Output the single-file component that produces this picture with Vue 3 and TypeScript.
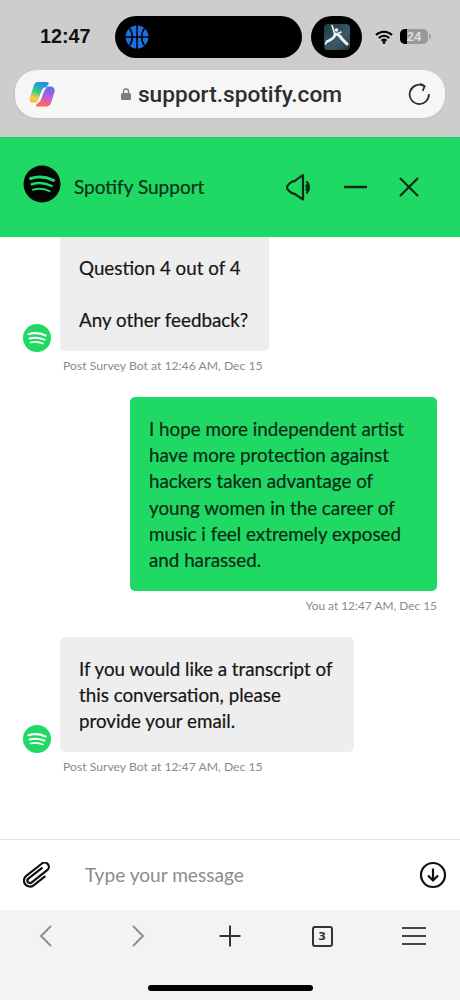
<script setup lang="ts">
interface Message {
  id: number
  mine: boolean
  width: number
  lines: string[]
  meta: string
}
const messages: Message[] = [
  { id: 1, mine: false, width: 209, lines: ['Question 4 out of 4', '', 'Any other feedback?'], meta: 'Post Survey Bot at 12:46 AM, Dec 15' },
  { id: 2, mine: true, width: 307, lines: ['I hope more independent artist', 'have more protection against', 'hackers taken advantage of', 'young women in the career of', 'music i feel extremely exposed', 'and harassed.'], meta: 'You at 12:47 AM, Dec 15' },
  { id: 3, mine: false, width: 294, lines: ['If you would like a transcript of', 'this conversation, please', 'provide your email.'], meta: 'Post Survey Bot at 12:47 AM, Dec 15' },
]
</script>

<template>
  <div class="phone">
    <div class="chrome">
      <div class="status">
        <span class="time">12:47</span>
        <div class="island">
          <svg class="ball" viewBox="0 0 24 24" width="24" height="24">
            <circle cx="12" cy="12" r="11.500" fill="#1d6fe0" />
            <g fill="none" stroke="#000" stroke-width="1.500">
              <path d="M12 0v24M0 12h24" />
              <path d="M4.500 3.500c3.800 4.500 3.800 12.500 0 17M19.500 3.500c-3.800 4.500-3.800 12.500 0 17" />
            </g>
          </svg>
        </div>
        <div class="island-dot">
          <svg viewBox="0 0 26 26" width="26" height="26">
            <defs>
              <linearGradient id="thumb" x1="0" y1="0" x2="1" y2="1">
                <stop offset="0" stop-color="#1f3a48" />
                <stop offset="0.6" stop-color="#3a5a68" />
                <stop offset="1" stop-color="#26343c" />
              </linearGradient>
            </defs>
            <rect width="26" height="26" rx="4" fill="url(#thumb)" />
            <circle cx="12.500" cy="6" r="1.800" fill="#eef4f5" />
            <g fill="none" stroke="#eef4f5" stroke-linecap="round" stroke-linejoin="round">
              <path d="M8 1.500 10.500 9" stroke-width="1.600" />
              <path d="M11 10c3 0 5 1.500 7 5l5 5" stroke-width="3" />
              <path d="M11 11c-1 3-4 5-8 6.500" stroke-width="2.600" />
              <path d="M3 17.500 1.500 20" stroke-width="1.600" />
              <path d="M13 10l4-2" stroke-width="1.600" />
            </g>
          </svg>
        </div>
        <div class="status-right">
          <svg viewBox="0 0 18 14" width="18" height="14">
            <path d="M1 5c4.500-4.500 11.500-4.500 16 0M3.800 8c3-3 7.400-3 10.400 0M6.500 10.800c1.500-1.400 3.500-1.400 5 0" fill="none" stroke="#000" stroke-width="2" />
            <circle cx="9" cy="12.500" r="1.400" fill="#000" />
          </svg>
          <div class="battery">
            <div class="battery-fill"></div>
            <span class="battery-num">24</span>
          </div>
          <div class="battery-nub"></div>
        </div>
      </div>
      <div class="urlbar">
        <svg class="copilot" viewBox="0 0 26 26" width="26" height="26">
          <defs>
            <linearGradient id="cpa" x1="0.5" y1="0" x2="0.2" y2="1">
              <stop offset="0" stop-color="#1f8fe8" />
              <stop offset="0.45" stop-color="#35c98a" />
              <stop offset="0.8" stop-color="#f3d63e" />
              <stop offset="1" stop-color="#f7b23b" />
            </linearGradient>
            <linearGradient id="cpb" x1="0.6" y1="0" x2="0.4" y2="1">
              <stop offset="0" stop-color="#5a6ef0" />
              <stop offset="0.5" stop-color="#b75fe0" />
              <stop offset="0.8" stop-color="#f0608a" />
              <stop offset="1" stop-color="#f4703a" />
            </linearGradient>
          </defs>
          <path d="M9 1h9c1.500 0 2 1 1.500 2.200L15 8 10.500 18.500C9.500 20.500 8 21.500 6 21.500H4c-2.500 0-4-2-3.200-4.500L5 4c.6-1.800 2-3 4-3z" fill="url(#cpa)" />
          <path d="M16 5.500h5.500c3 0 4.800 2.500 4 5.200L22 22c-.7 2.300-2.500 3.500-4.500 3.500H8.500c-1.400 0-1.800-1-1-2l3.500-3.500 4-11z" fill="url(#cpb)" />
          <path d="M15.500 6.500c-1.700 1-2.500 2.500-3.200 4.300l-2.600 7c-.6 1.500-1.200 2.500-2 3.200 2 .2 3.500-.7 4.300-2.800l2.700-7.200c.6-1.800 1.800-3.300 3.300-4.500z" fill="#fdfdfd" />
        </svg>
        <div class="address">
          <svg viewBox="0 0 10 12" width="10" height="12">
            <path d="M2.500 5V3.500a2.500 2.500 0 0 1 5 0V5" fill="none" stroke="#7c7c7c" stroke-width="1.300" />
            <rect y="5" width="10" height="7" rx="1.500" fill="#7c7c7c" />
          </svg>
          <span>support.spotify.com</span>
        </div>
        <svg class="reload" viewBox="0 0 24 24" width="22" height="22">
          <path d="M17.500 3.300A10.500 10.500 0 1 0 22.800 12" fill="none" stroke="#2b2b2b" stroke-width="1.900" />
          <path d="M13.500 .8l4.700 2.700-2.200 5" fill="none" stroke="#2b2b2b" stroke-width="1.900" />
        </svg>
      </div>
    </div>

    <header class="head">
      <svg class="logo" viewBox="0 0 38 38" width="38" height="38">
        <circle cx="19" cy="19" r="18.500" fill="#050505" />
        <g fill="none" stroke="#1fd964" stroke-linecap="round">
          <path d="M7.500 13.500c7.500-2.400 15.500-1.800 23 1.800" stroke-width="3" />
          <path d="M8.800 19.300c6.500-2 13.500-1.400 19.800 1.700" stroke-width="2.500" />
          <path d="M10 24.700c5.500-1.500 11.200-1 16.500 1.500" stroke-width="2" />
        </g>
      </svg>
      <span class="title">Spotify Support</span>
      <div class="head-actions">
        <svg viewBox="0 0 27 27" width="27" height="27">
          <path d="M17 1.200V25.500L8 19.500H6.500C3.500 17.500 1 15.500 1 13.400s2.500-4 5.500-6L8 7.300z" fill="none" stroke="#0b2b16" stroke-width="2.200" stroke-linejoin="round" />
          <path d="M20.500 7.500c3.200 3 3.200 9 0 12" fill="none" stroke="#0b2b16" stroke-width="2.200" />
          <path d="M20 10.500c1.500 2 1.500 4 0 6" fill="none" stroke="#0b2b16" stroke-width="2.200" />
        </svg>
        <svg viewBox="0 0 23 4" width="23" height="4">
          <path d="M0 2h23" stroke="#0b2b16" stroke-width="2.500" />
        </svg>
        <svg viewBox="0 0 22 22" width="22" height="22">
          <path d="M2 2l18 18M20 2 2 20" stroke="#0b2b16" stroke-width="2.200" />
        </svg>
      </div>
    </header>

    <main class="chat">
      <div v-for="m in messages" :key="m.id" class="msg" :class="{ mine: m.mine }">
        <div class="row">
          <svg v-if="!m.mine" class="avatar" viewBox="0 0 28 28" width="28" height="28">
            <circle cx="14" cy="14" r="14" fill="#1fd964" />
            <g fill="none" stroke="#fff" stroke-linecap="round">
              <path d="M5.500 10.200c5.500-1.600 11.500-1.200 17 1.300" stroke-width="2.200" />
              <path d="M6.500 14.500c5-1.300 10-.9 15 1.200" stroke-width="2" />
              <path d="M7.500 18.500c4-1 8.500-.7 12.500 1" stroke-width="1.700" />
            </g>
          </svg>
          <div class="bubble" :style="{ width: m.width + 'px' }">
            <p v-for="(line, i) in m.lines" :key="i" class="line">{{ line }}</p>
          </div>
        </div>
        <div class="meta">{{ m.meta }}</div>
      </div>
    </main>

    <div class="composer">
      <svg class="clip" viewBox="0 0 28 26" width="28" height="26">
        <g transform="translate(14 13) rotate(-38)" fill="none" stroke="#111" stroke-width="2.200" stroke-linecap="round">
          <path d="M8-2.500H-9a2.500 2.500 0 0 0 0 5H11a4.250 4.250 0 0 0 0-8.500H-9a6 6 0 0 0 0 12H5" />
        </g>
      </svg>
      <span class="placeholder">Type your message</span>
      <svg viewBox="0 0 28 28" width="28" height="28">
        <circle cx="14" cy="14" r="12" fill="none" stroke="#111" stroke-width="2.200" />
        <path d="M14 7.500v12M9 14.500l5 5 5-5" fill="none" stroke="#111" stroke-width="2.200" />
      </svg>
    </div>

    <nav class="toolbar">
      <div class="tools">
        <svg viewBox="0 0 14 24" width="14" height="24"><path d="M12 2 2 12l10 10" fill="none" stroke="#8a8a8a" stroke-width="1.800" /></svg>
        <svg viewBox="0 0 14 24" width="14" height="24"><path d="M2 2 12 12 2 22" fill="none" stroke="#8a8a8a" stroke-width="1.800" /></svg>
        <svg viewBox="0 0 22 22" width="22" height="22"><path d="M11 .5v21M.5 11h21" stroke="#333" stroke-width="2" /></svg>
        <div class="tabs">3</div>
        <svg viewBox="0 0 24 20" width="24" height="20"><path d="M0 2h24M0 10h24M0 18h24" stroke="#444" stroke-width="1.800" /></svg>
      </div>
      <div class="home"></div>
    </nav>
  </div>
</template>

<style>
html, body { margin: 0; background: #fff; }
</style>

<style scoped>
.phone {
  width: 460px;
  height: 1000px;
  display: flex;
  flex-direction: column;
  overflow: hidden;
  font-family: Lato, "Open Sans", sans-serif;
}
.chrome {
  height: 137px;
  flex: none;
  box-sizing: border-box;
  background: #cdcdcd;
  padding: 15px 15px 0;
}
.status {
  height: 43px;
  display: flex;
  align-items: center;
}
.time {
  width: 100px;
  padding-left: 25px;
  box-sizing: border-box;
  font: 700 19.800px "Liberation Sans", sans-serif;
  color: #111;
}
.island {
  width: 187px;
  height: 42px;
  border-radius: 21px;
  background: #000;
  display: flex;
  align-items: center;
  padding-left: 10px;
  box-sizing: border-box;
}
.island-dot {
  width: 51px;
  height: 42px;
  margin-left: 9px;
  border-radius: 21px;
  background: #000;
  display: flex;
  align-items: center;
  justify-content: center;
}
.status-right {
  display: flex;
  align-items: center;
  margin-left: 13px;
}
.battery {
  position: relative;
  width: 28px;
  height: 15px;
  margin-left: 7px;
  border-radius: 5px;
  background: #989898;
  overflow: hidden;
}
.battery-fill {
  width: 7px;
  height: 100%;
  background: #000;
}
.battery-num {
  position: absolute;
  inset: 0;
  text-align: center;
  font: 700 13px/15px "Liberation Sans", sans-serif;
  color: #dedede;
}
.battery-nub {
  width: 2px;
  height: 5px;
  margin-left: 1px;
  border-radius: 0 2px 2px 0;
  background: #9c9c9c;
}
.urlbar {
  height: 48px;
  margin-top: 12px;
  border-radius: 22px;
  background: #f6f6f6;
  box-shadow: 0 1px 3px rgba(0, 0, 0, 0.08);
  display: flex;
  align-items: center;
  padding: 0 15px 0 14px;
}
.copilot { flex: none; }
.address {
  flex: 1;
  display: flex;
  align-items: center;
  justify-content: center;
  gap: 7px;
  font: 500 22.700px Roboto, "Liberation Sans", sans-serif;
  color: #2e2e2e;
}
.reload { flex: none; }
.head {
  height: 100px;
  flex: none;
  background: #1fd964;
  display: flex;
  align-items: center;
  padding: 0 40px 0 23px;
}
.logo { flex: none; margin-top: -7px; }
.title {
  margin-left: 13px;
  margin-top: -1px;
  font-size: 19px;
  color: #0a3018;
  -webkit-text-stroke: 0.2px #0a3018;
}
.head-actions {
  margin-left: auto;
  display: flex;
  align-items: center;
  gap: 31px;
}
.chat {
  flex: 1;
  min-height: 0;
  display: flex;
  flex-direction: column;
  gap: 24px;
  background: #fff;
}
.msg { display: flex; flex-direction: column; }
.msg.mine { align-items: flex-end; padding-right: 23px; }
.row {
  display: flex;
  align-items: flex-end;
  padding-left: 23px;
}
.msg.mine .row { padding-left: 0; }
.avatar { flex: none; margin-right: 9px; margin-bottom: -1px; }
.bubble {
  box-sizing: border-box;
  background: #eeeeee;
  color: #161616;
  padding: 19px 0 17.400px 19px;
  border-radius: 5px;
  font-size: 18.800px;
  line-height: 26.200px;
  -webkit-text-stroke: 0.2px currentColor;
}
.msg:first-child .bubble { border-radius: 0 0 5px 5px; padding-top: 18px; }
.mine .bubble {
  background: #1fd964;
  color: #0a2b15;
  padding-bottom: 17.800px;
}
.line { margin: 0; min-height: 26.200px; white-space: nowrap; }
.meta {
  margin-top: 7px;
  font-size: 12.200px;
  line-height: 15px;
  color: #8b8b8b;
  padding-left: 63px;
}
.mine .meta { padding-left: 0; font-size: 11.900px; }
.composer {
  height: 71px;
  flex: none;
  box-sizing: border-box;
  border-top: 1px solid #e4e4e4;
  background: #fff;
  display: flex;
  align-items: center;
  padding: 0 13px 0 23px;
}
.placeholder {
  margin-left: 34px;
  margin-top: -2px;
  font-size: 19.100px;
  color: #8c8c8c;
  flex: 1;
}
.toolbar {
  height: 90px;
  flex: none;
  background: #f3f3f3;
  display: flex;
  flex-direction: column;
  align-items: center;
}
.tools {
  width: 460px;
  height: 52px;
  display: grid;
  grid-template-columns: repeat(5, 92px);
  justify-items: center;
  align-items: center;
}
.tabs {
  box-sizing: border-box;
  width: 21px;
  height: 21px;
  border: 2px solid #333;
  border-radius: 3px;
  text-align: center;
  font: 700 11px/17px "DejaVu Sans", sans-serif;
  color: #333;
}
.home {
  width: 165px;
  height: 6px;
  margin-top: 23px;
  border-radius: 3px;
  background: #000;
}
</style>
